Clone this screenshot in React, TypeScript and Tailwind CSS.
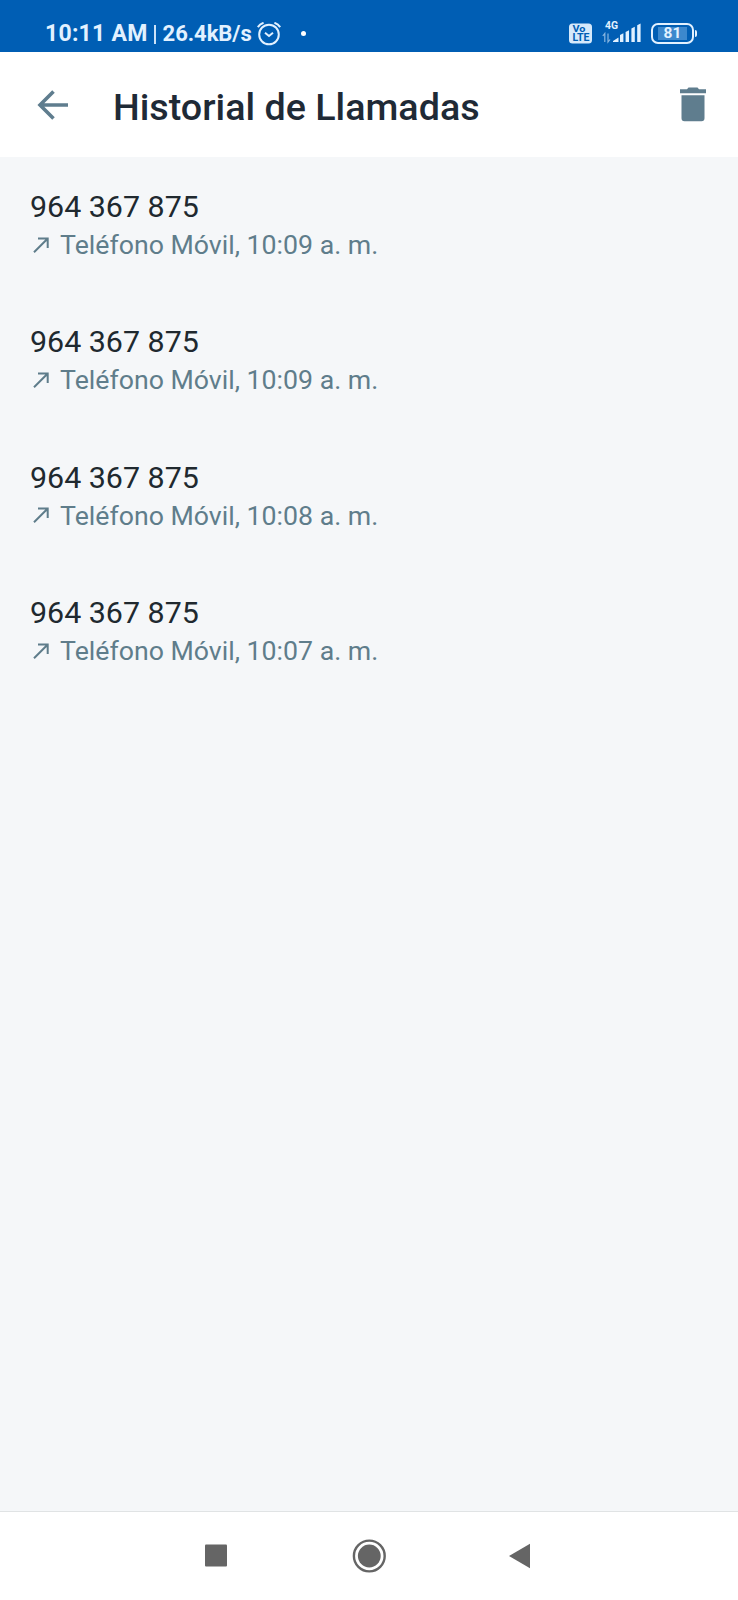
type Call = {
  id: number;
  number: string;
  label: string;
  time: string;
};

const calls: Call[] = [
  { id: 1, number: "964 367 875", label: "Teléfono Móvil", time: "10:09 a. m." },
  { id: 2, number: "964 367 875", label: "Teléfono Móvil", time: "10:09 a. m." },
  { id: 3, number: "964 367 875", label: "Teléfono Móvil", time: "10:08 a. m." },
  { id: 4, number: "964 367 875", label: "Teléfono Móvil", time: "10:07 a. m." },
];

const AlarmIcon = () => (
  <svg className="ml-[5px] h-6 w-6 shrink-0" viewBox="0 0 24 24" fill="none" stroke="currentColor" strokeWidth="2">
    <circle cx="12" cy="12.5" r="9.8" />
    <path d="M.8 5.1Q3 1.9 6.6.8M23.2 5.1Q21 1.9 17.4.8M8 10.8l4 3.2 4-3.2" />
  </svg>
);

const VolteIcon = () => (
  <svg className="h-[21px] w-[23px]" viewBox="0 0 23 21" fontWeight="700" fontFamily="Roboto, sans-serif">
    <rect y=".5" width="23" height="20" rx="3.5" fill="#d5e9fb" />
    <text x="3.5" y="9.2" fontSize="9.6" textLength="13" lengthAdjust="spacingAndGlyphs" fill="#005eb4">
      Vo
    </text>
    <text x="3.5" y="18.2" fontSize="10" textLength="17" lengthAdjust="spacingAndGlyphs" fill="#005eb4">
      LTE
    </text>
  </svg>
);

const SignalIcon = () => (
  <svg className="h-6 w-[39px]" viewBox="0 0 39 24" fill="currentColor">
    <text x="3" y="9" fontSize="10.4" fontWeight="700" fontFamily="Roboto, sans-serif">
      4G
    </text>
    <path d="M2.8 22v-8.5L.8 16M6 13.5V22l2-2.5" fill="none" stroke="currentColor" strokeWidth="1.2" opacity=".6" />
    <path d="M11 22v-1l5.5-3.5V22zM18 22v-7l3.400-1.8V22zM23.600 22V12l3.400-1.8V22zM29.400 22V8.5l3.400-1.8V22zM35.200 22V5.3l3.400-1.8V22z" />
  </svg>
);

const StatusBar = () => {
  return (
    <div className="flex h-[52px] items-start justify-between bg-[#005eb4] pl-[45px] pr-[41px] text-[#e2f1ff]">
      <div className="mt-[21px] flex h-[26px] items-center">
        <span className="text-[23px] leading-[26px] font-bold tracking-[0.25px] whitespace-pre">10:11 AM</span>
        <span className="mr-[7px] ml-[6px] h-[19px] w-[2px] bg-current opacity-90" />
        <span className="text-[22px] leading-[26px] font-bold tracking-[-0.05px]">26.4kB/s</span>
        <AlarmIcon />
        <span className="ml-[20px] h-[5px] w-[5px] -translate-y-px rounded-full bg-white" />
      </div>
      <div className="mt-[21px] flex h-6 items-center">
        <VolteIcon />
        <div className="mr-[10px] ml-[10px] -translate-y-px">
          <SignalIcon />
        </div>
        <div className="flex h-[21px] w-[43px] items-center justify-center rounded-[7px] border-[2.5px] border-current">
          <div className="flex h-[13px] w-[29px] items-center justify-center bg-[#3c88cd] text-[15.5px] leading-none font-bold">
            <span className="pt-px">81</span>
          </div>
        </div>
        <span className="ml-px h-[7px] w-[2px] rounded-r bg-current" />
      </div>
    </div>
  );
};

const Header = () => {
  return (
    <header className="flex h-[105px] items-center bg-white pr-[31px] pl-[37px] text-[#5f7d8e]">
      <button type="button" aria-label="Volver">
        <svg className="h-8 w-8" viewBox="0 0 32 32" fill="none" stroke="currentColor" strokeWidth="3.6">
          <path d="M31 16H3M16.5 2.5 3 16l13.5 13.5" />
        </svg>
      </button>
      <h1 className="mt-1 ml-11 flex-1 text-[37.7px] leading-[44px] font-medium text-[#1f2a36]">
        Historial de Llamadas
      </h1>
      <button type="button" aria-label="Borrar">
        <svg className="h-[35px] w-7" viewBox="0 0 28 35" fill="currentColor">
          <path d="M1 2.3h7L9.5.5h9L20 2.3h7v3.9H1zM2.5 8.3h23v23a3 3 0 0 1-3 3h-17a3 3 0 0 1-3-3z" />
        </svg>
      </button>
    </header>
  );
};

const CallRow = ({ call }: { call: Call }) => {
  return (
    <li className="h-[135.4px] pt-8 pl-[30px]">
      <p className="text-[30.4px] leading-9 text-[#20292f]">{call.number}</p>
      <div className="mt-1 flex items-center text-[#5f7d8b]">
        <svg className="mb-px ml-[3px] h-4 w-4" viewBox="0 0 16 16" fill="none" stroke="currentColor" strokeWidth="2">
          <path d="M1 15.3 14.5 1.8M5 1.5h9.7V11" />
        </svg>
        <span className="ml-[11px] text-[26.7px] leading-8">
          {call.label}, {call.time}
        </span>
      </div>
    </li>
  );
};

const NavBar = () => {
  return (
    <nav className="h-[89px] border-t border-[#e0e3e4] bg-white text-[#656565]">
      <svg className="h-[88px] w-full" viewBox="0 0 738 88" fill="currentColor">
        <rect x="205" y="32.5" width="22" height="22" rx="1" />
        <circle cx="369.3" cy="44" r="15.4" fill="none" stroke="currentColor" strokeWidth="2.4" />
        <circle cx="369.3" cy="44" r="11.4" />
        <path d="M509 44 530 31.8v24.4z" />
      </svg>
    </nav>
  );
};

export default function App() {
  return (
    <div className="flex h-[1600px] w-[738px] flex-col overflow-hidden bg-[#f5f7f9] font-['Roboto',sans-serif]">
      <StatusBar />
      <Header />
      <ul className="flex-1">
        {calls.map((call) => (
          <CallRow key={call.id} call={call} />
        ))}
      </ul>
      <NavBar />
    </div>
  );
}
